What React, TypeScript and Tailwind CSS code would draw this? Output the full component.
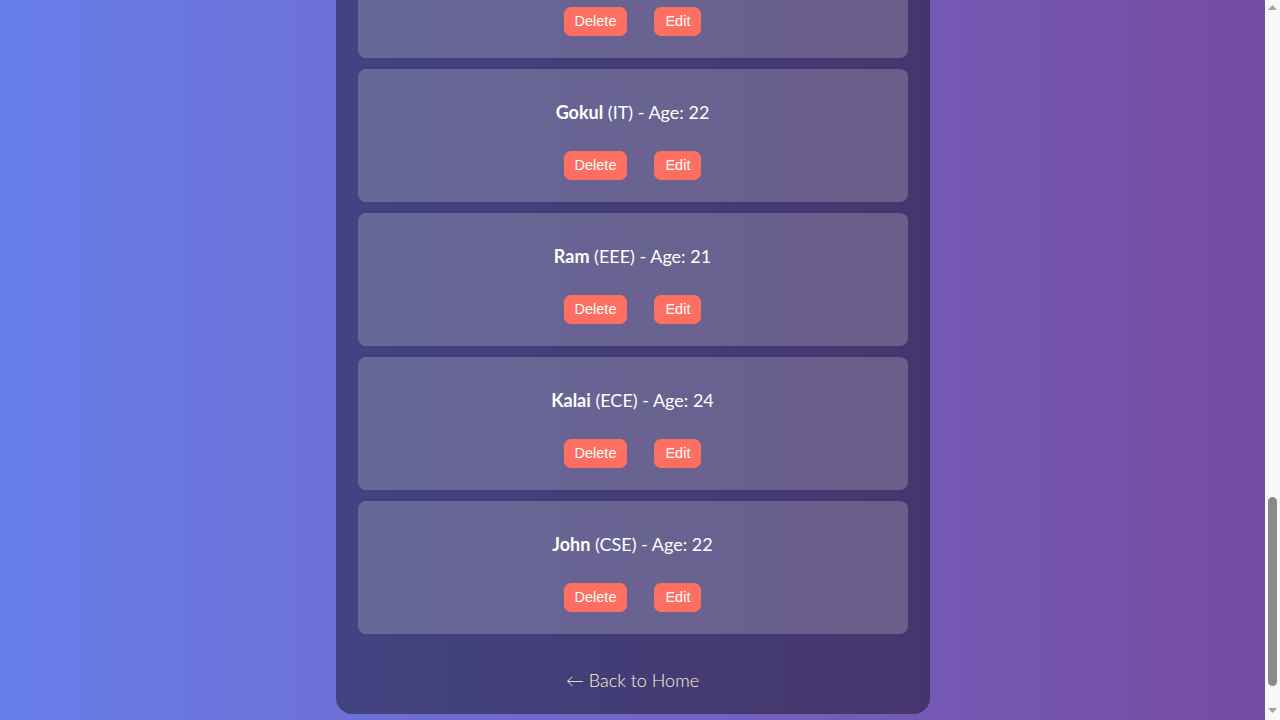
import React, { useLayoutEffect, useRef } from "react";

type Student = { name: string; dept: string; age: number };

const students: Student[] = [
  { name: "Arun", dept: "CSE", age: 20 },
  { name: "Priya", dept: "IT", age: 21 },
  { name: "Vijay", dept: "MECH", age: 22 },
  { name: "Divya", dept: "ECE", age: 20 },
  { name: "Karthik", dept: "EEE", age: 23 },
  { name: "Meena", dept: "CSE", age: 21 },
  { name: "Surya", dept: "CIVIL", age: 22 },
  { name: "Lakshmi", dept: "IT", age: 20 },
  { name: "Hari", dept: "ECE", age: 23 },
  { name: "Anitha", dept: "CSE", age: 21 },
  { name: "Gokul", dept: "IT", age: 22 },
  { name: "Ram", dept: "EEE", age: 21 },
  { name: "Kalai", dept: "ECE", age: 24 },
  { name: "John", dept: "CSE", age: 22 },
];

function Card({ s }: { s: Student }) {
  return (
    <div className="rounded-lg bg-white/20 pt-[31px] pb-[22px] flex flex-col items-center">
      <div
        className="text-[18px] leading-6 text-white"
        style={{ fontFamily: "Lato, 'Noto Sans', sans-serif" }}
      >
        <span className="font-bold">{s.name}</span> ({s.dept}) - Age: {s.age}
      </div>
      <div className="mt-[27px] flex gap-[27px]">
        <button
          className="h-[29px] px-[11px] rounded-[7px] bg-[#ff6f61] text-white text-[14.5px]"
          style={{ fontFamily: "'Liberation Sans', Arial, sans-serif" }}
        >
          Delete
        </button>
        <button
          className="h-[29px] px-[11px] rounded-[7px] bg-[#ff6f61] text-white text-[14.5px]"
          style={{ fontFamily: "'Liberation Sans', Arial, sans-serif" }}
        >
          Edit
        </button>
      </div>
    </div>
  );
}

function Scrollbar() {
  return (
    <div className="w-[15px] shrink-0 bg-[#f8f8f8] flex flex-col">
      <div className="h-[15px] flex items-center justify-center">
        <svg width="9" height="5" viewBox="0 0 9 5">
          <path d="M4.5 0 L9 5 L0 5 Z" fill="#a3a3a3" />
        </svg>
      </div>
      <div className="flex-1 flex flex-col justify-end pb-[19px] px-[3px]">
        <div className="h-[189px] rounded-full bg-[#8a8a8a]" />
      </div>
      <div className="h-[15px] flex items-start justify-center pt-[3px]">
        <svg width="9" height="5" viewBox="0 0 9 5">
          <path d="M0 0 L9 0 L4.5 5 Z" fill="#a3a3a3" />
        </svg>
      </div>
    </div>
  );
}

export default function App() {
  const ref = useRef<HTMLDivElement>(null);
  useLayoutEffect(() => {
    if (ref.current) ref.current.scrollTop = ref.current.scrollHeight;
  }, []);

  return (
    <div className="h-screen flex overflow-hidden">
      <div
        ref={ref}
        className="flex-1 overflow-y-auto [scrollbar-width:none] [&::-webkit-scrollbar]:hidden"
      >
        <div
          className="min-h-full bg-gradient-to-r from-[#667eea] to-[#764ba2] pt-[40px] pb-[6px]"
          style={{ fontFamily: "Lato, 'Noto Sans', sans-serif" }}
        >
          <div className="mx-auto w-[594px] rounded-2xl bg-black/40 px-[22px] pt-[30px] pb-[20px]">
            <h1 className="text-3xl font-bold text-white text-center mb-6">Student Management</h1>
            <div className="rounded-lg bg-white/20 p-6 flex flex-col gap-4 h-[300px]">
              <input className="h-10 rounded-md bg-white/90 px-3 text-sm" placeholder="Name" />
              <input className="h-10 rounded-md bg-white/90 px-3 text-sm" placeholder="Department" />
              <input className="h-10 rounded-md bg-white/90 px-3 text-sm" placeholder="Age" />
              <button className="h-10 rounded-md bg-[#ff6f61] text-white">Add Student</button>
            </div>
            <h2 className="mt-8 mb-4 text-2xl font-bold text-white text-center">Student List</h2>
            <div className="flex flex-col gap-[11px]">
              {students.map((s) => (
                <Card key={s.name} s={s} />
              ))}
            </div>
            <div className="mt-[32px] text-center text-[18px] leading-[28px] font-light text-[#fff3d6]">
              ← Back to Home
            </div>
          </div>
        </div>
      </div>
      <Scrollbar />
    </div>
  );
}
